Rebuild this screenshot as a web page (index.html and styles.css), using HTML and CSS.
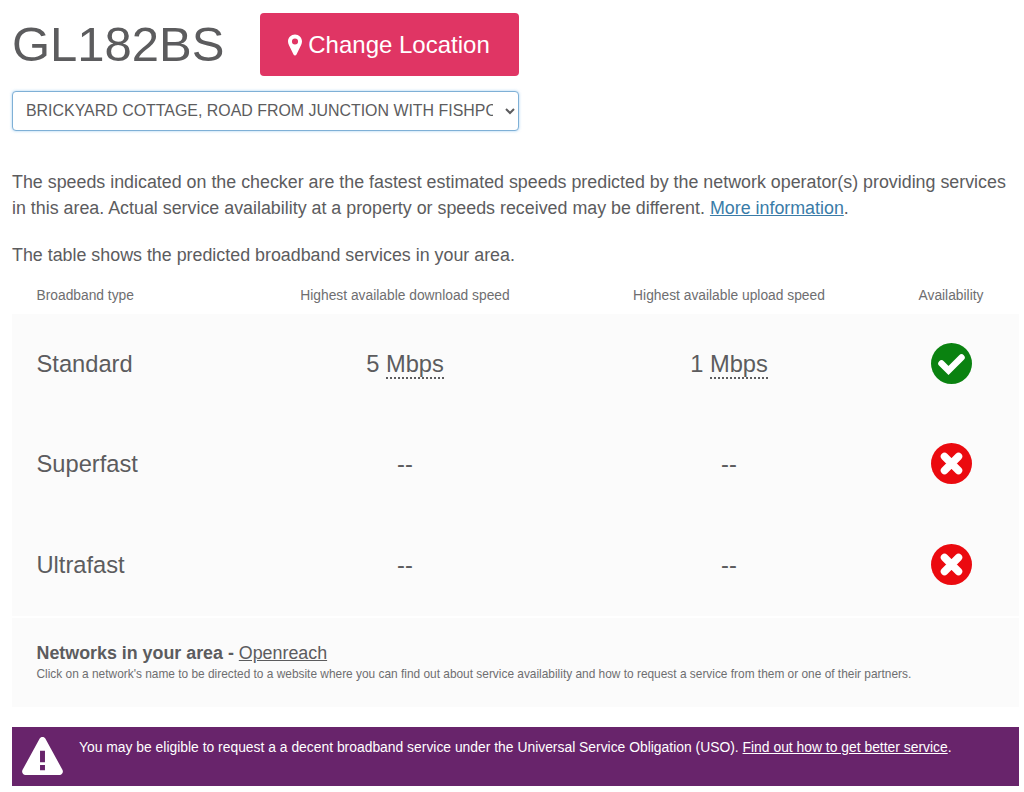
FILE: index.html
```html
<!DOCTYPE html>
<html lang="en">
<head>
    <meta charset="UTF-8">
    <title>Broadband Checker</title>
    <link rel="stylesheet" href="styles.css">
</head>
<body>
    <div class="postcode-row">
        <h1 class="postcode">GL182BS</h1>
        <a class="change-btn" href="#">
            <svg class="pin" viewBox="0 0 16 24"><path fill-rule="evenodd" d="M8 0C3.600 0 0 3.500 0 8c0 1.600.4 2.700 1 3.900L6.300 22.900c.7 1.500 2.700 1.500 3.400 0L15 11.900c.6-1.200 1-2.300 1-3.900 0-4.500-3.600-8-8-8zm0 11.500a3.500 3.500 0 1 1 0-7 3.500 3.500 0 0 1 0 7z"/></svg>
            Change Location
        </a>
    </div>

    <select class="address-select">
        <option>BRICKYARD COTTAGE, ROAD FROM JUNCTION WITH FISHPOOL LANE</option>
    </select>

    <p class="intro">The speeds indicated on the checker are the fastest estimated speeds predicted by the network operator(s) providing services in this area. Actual service availability at a property or speeds received may be different. <a href="#">More information</a>.</p>
    <p class="table-note">The table shows the predicted broadband services in your area.</p>

    <div class="speed-table">
        <div class="table-head">
            <div class="first">Broadband type</div>
            <div>Highest available download speed</div>
            <div>Highest available upload speed</div>
            <div>Availability</div>
        </div>
        <div class="table-row">
            <div class="first">Standard</div>
            <div>5 <span class="abbr">Mbps</span></div>
            <div>1 <span class="abbr">Mbps</span></div>
            <div>
                <svg class="status" viewBox="0 0 41 41"><circle cx="20.500" cy="20.500" r="20.500" fill="#0a8210"/><path d="M10.500 20.500l7 7L30.500 14.500" fill="none" stroke="#fff" stroke-width="6.500" stroke-linecap="round"/></svg>
            </div>
        </div>
        <div class="table-row">
            <div class="first">Superfast</div>
            <div>--</div>
            <div>--</div>
            <div>
                <svg class="status" viewBox="0 0 41 41"><circle cx="20.500" cy="20.500" r="20.500" fill="#eb0a0f"/><path d="M13.500 13.500l14 14m0-14l-14 14" fill="none" stroke="#fff" stroke-width="7.500" stroke-linecap="round"/></svg>
            </div>
        </div>
        <div class="table-row">
            <div class="first">Ultrafast</div>
            <div>--</div>
            <div>--</div>
            <div>
                <svg class="status" viewBox="0 0 41 41"><circle cx="20.500" cy="20.500" r="20.500" fill="#eb0a0f"/><path d="M13.500 13.500l14 14m0-14l-14 14" fill="none" stroke="#fff" stroke-width="7.500" stroke-linecap="round"/></svg>
            </div>
        </div>
    </div>

    <div class="networks">
        <div class="networks-title"><strong>Networks in your area -</strong> <a href="#">Openreach</a></div>
        <div class="networks-help">Click on a network's name to be directed to a website where you can find out about service availability and how to request a service from them or one of their partners.</div>
    </div>

    <div class="uso-banner">
        <svg class="warn" viewBox="0 0 43 40"><path fill="#fff" fill-rule="evenodd" d="M21.500 0c1.300 0 2.500.7 3.100 1.800l18 33c1.100 2.300-.4 5.200-3.100 5.200H3.500C.8 40-.7 37.100.4 34.800l18-33C19 .7 20.200 0 21.500 0zM18.900 14.500v12h5.200v-12h-5.200zm0 15v5.500h5.200v-5.500h-5.200z"/></svg>
        <p>You may be eligible to request a a decent broadband service under the Universal Service Obligation (USO). <a href="#">Find out how to get better service</a>.</p>
    </div>
</body>
</html>
```

FILE: styles.css
```css
/* General Styles */
body {
    font-family: 'Liberation Sans', Arial, sans-serif;
    margin: 0;
    padding: 13px 5px 0 12px;
    background-color: #fff;
    color: #5c5c5e;
}

a {
    color: inherit;
}

.postcode-row {
    display: flex;
    align-items: center;
    gap: 35px;
}

.postcode {
    margin: 0;
    font-size: 49px;
    font-weight: 400;
    line-height: 63px;
}

.change-btn {
    display: flex;
    align-items: center;
    justify-content: center;
    gap: 6px;
    box-sizing: border-box;
    width: 259px;
    height: 63px;
    background-color: #e03564;
    color: #fff;
    font-size: 24px;
    text-decoration: none;
    border-radius: 4px;
}

.pin {
    width: 14px;
    height: 22px;
    fill: #fff;
}

.address-select {
    display: block;
    width: 507px;
    height: 40px;
    margin-top: 15px;
    padding: 0 9px 2px;
    font-family: inherit;
    font-size: 15.930px;
    color: #5c5c5e;
    background-color: #fff;
    border: 1px solid #7fb0d6;
    border-radius: 4px;
    box-shadow: 0 0 3px rgba(102, 175, 233, 0.6);
}

.intro {
    margin: 38px 0 0;
    font-size: 17.850px;
    line-height: 26px;
}

.intro a {
    color: #3a7ca8;
}

.table-note {
    margin: 21px 0 0;
    font-size: 17.850px;
    line-height: 26px;
}

/* Table */
.speed-table {
    margin-top: 5px;
    width: 1007px;
}

.table-head,
.table-row {
    display: grid;
    grid-template-columns: 223px 340px 308px 136px;
    text-align: center;
}

.table-head {
    height: 41px;
    padding-top: 4px;
    box-sizing: border-box;
    align-items: center;
    font-size: 13.800px;
    color: #6e6e70;
}

.table-row {
    height: 100.500px;
    align-items: center;
    background-color: #fbfbfb;
    font-size: 23.700px;
}

.first {
    text-align: left;
    padding-left: 24.500px;
}

.abbr {
    border-bottom: 2px dotted #5c5c5e;
}

.status {
    display: block;
    width: 41px;
    height: 41px;
    margin: 0 auto 2px;
}

/* Networks */
.networks {
    width: 1007px;
    box-sizing: border-box;
    height: 89px;
    margin-top: 2.500px;
    padding: 23px 24.500px 0;
    background-color: #fbfbfb;
}

.networks-title {
    font-size: 17.850px;
    line-height: 24px;
}

.networks-help {
    font-size: 11.900px;
    line-height: 18px;
    color: #6e6e70;
}

/* USO banner */
.uso-banner {
    display: flex;
    width: 1007px;
    box-sizing: border-box;
    height: 59px;
    margin-top: 20px;
    padding: 10px 8px 0;
    background-color: #68246b;
    color: #fff;
    font-size: 13.880px;
}

.warn {
    width: 45px;
    height: 38px;
    flex-shrink: 0;
}

.uso-banner p {
    margin: 1px 0 0 14px;
    line-height: 18px;
}
```
